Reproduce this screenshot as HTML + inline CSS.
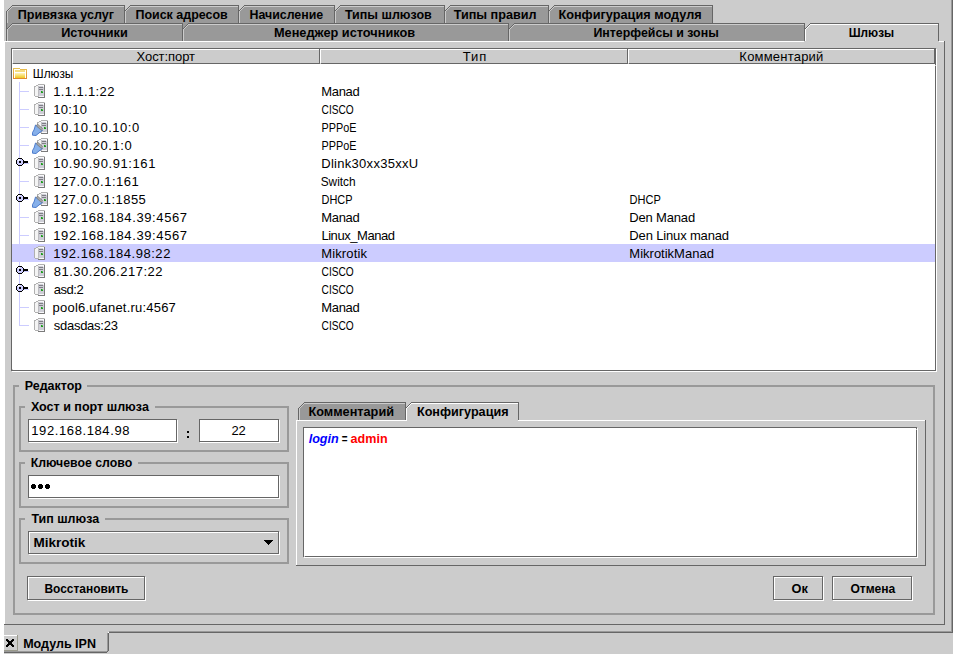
<!DOCTYPE html><html><head><meta charset="utf-8"><style>html,body{margin:0;padding:0;background:#fff;overflow:hidden}svg{display:block} text{font-family:"Liberation Sans",sans-serif;font-size:13px}</style></head><body><svg width="956" height="654" viewBox="0 0 956 654" shape-rendering="crispEdges"><rect x="0" y="0" width="956" height="654" fill="#ffffff"/>
<rect x="4" y="0" width="949" height="654" fill="#cccccc"/>
<rect x="951" y="0" width="1" height="632" fill="#999999"/>
<rect x="109" y="631" width="843" height="1" fill="#999999"/>
<rect x="952" y="0" width="1" height="633" fill="#666666"/>
<rect x="109" y="632" width="844" height="1" fill="#666666"/>
<rect x="107" y="633" width="1" height="18" fill="#999999"/>
<rect x="4" y="651" width="103" height="1" fill="#999999"/>
<rect x="108" y="633" width="1" height="18" fill="#666666"/>
<rect x="107" y="651" width="1" height="1" fill="#666666"/>
<rect x="4" y="652" width="103" height="1" fill="#666666"/>
<rect x="108" y="632" width="1" height="1" fill="#ffffff"/>
<rect x="4" y="635" width="13" height="1" fill="#ffffff"/>
<rect x="17" y="635" width="1" height="16" fill="#9a9a8c"/>
<rect x="4" y="650" width="14" height="1" fill="#9a9a8c"/>
<rect x="7" y="5" width="5" height="3" fill="#cccccc"/>
<rect x="7" y="8" width="2" height="2" fill="#cccccc"/>
<rect x="10" y="7" width="114" height="16" fill="#999999"/>
<rect x="8" y="10" width="2" height="13" fill="#999999"/>
<rect x="8" y="7" width="4" height="3" fill="#999999"/>
<rect x="7" y="5" width="1" height="1" fill="#cccccc"/>
<rect x="7" y="6" width="1" height="1" fill="#cccccc"/>
<rect x="7" y="7" width="1" height="1" fill="#cccccc"/>
<rect x="7" y="8" width="1" height="1" fill="#cccccc"/>
<rect x="7" y="9" width="1" height="1" fill="#cccccc"/>
<rect x="8" y="5" width="1" height="1" fill="#cccccc"/>
<rect x="8" y="6" width="1" height="1" fill="#cccccc"/>
<rect x="8" y="7" width="1" height="1" fill="#cccccc"/>
<rect x="8" y="8" width="1" height="1" fill="#cccccc"/>
<rect x="9" y="5" width="1" height="1" fill="#cccccc"/>
<rect x="9" y="6" width="1" height="1" fill="#cccccc"/>
<rect x="9" y="7" width="1" height="1" fill="#cccccc"/>
<rect x="10" y="5" width="1" height="1" fill="#cccccc"/>
<rect x="10" y="6" width="1" height="1" fill="#cccccc"/>
<rect x="11" y="5" width="1" height="1" fill="#cccccc"/>
<rect x="7" y="11" width="1" height="1" fill="#cccccc"/>
<rect x="8" y="10" width="1" height="1" fill="#cccccc"/>
<rect x="9" y="9" width="1" height="1" fill="#cccccc"/>
<rect x="10" y="8" width="1" height="1" fill="#cccccc"/>
<rect x="11" y="7" width="1" height="1" fill="#cccccc"/>
<rect x="12" y="6" width="1" height="1" fill="#cccccc"/>
<rect x="12" y="6" width="112" height="1" fill="#cccccc"/>
<rect x="7" y="11" width="1" height="12" fill="#cccccc"/>
<rect x="7" y="10" width="1" height="1" fill="#666666"/>
<rect x="8" y="9" width="1" height="1" fill="#666666"/>
<rect x="9" y="8" width="1" height="1" fill="#666666"/>
<rect x="10" y="7" width="1" height="1" fill="#666666"/>
<rect x="11" y="6" width="1" height="1" fill="#666666"/>
<rect x="12" y="5" width="1" height="1" fill="#666666"/>
<rect x="12" y="5" width="112" height="1" fill="#666666"/>
<rect x="6" y="11" width="1" height="12" fill="#666666"/>
<rect x="125" y="5" width="5" height="3" fill="#cccccc"/>
<rect x="125" y="8" width="2" height="2" fill="#cccccc"/>
<rect x="128" y="7" width="110" height="16" fill="#999999"/>
<rect x="126" y="10" width="2" height="13" fill="#999999"/>
<rect x="126" y="7" width="4" height="3" fill="#999999"/>
<rect x="125" y="5" width="1" height="1" fill="#cccccc"/>
<rect x="125" y="6" width="1" height="1" fill="#cccccc"/>
<rect x="125" y="7" width="1" height="1" fill="#cccccc"/>
<rect x="125" y="8" width="1" height="1" fill="#cccccc"/>
<rect x="125" y="9" width="1" height="1" fill="#cccccc"/>
<rect x="126" y="5" width="1" height="1" fill="#cccccc"/>
<rect x="126" y="6" width="1" height="1" fill="#cccccc"/>
<rect x="126" y="7" width="1" height="1" fill="#cccccc"/>
<rect x="126" y="8" width="1" height="1" fill="#cccccc"/>
<rect x="127" y="5" width="1" height="1" fill="#cccccc"/>
<rect x="127" y="6" width="1" height="1" fill="#cccccc"/>
<rect x="127" y="7" width="1" height="1" fill="#cccccc"/>
<rect x="128" y="5" width="1" height="1" fill="#cccccc"/>
<rect x="128" y="6" width="1" height="1" fill="#cccccc"/>
<rect x="129" y="5" width="1" height="1" fill="#cccccc"/>
<rect x="125" y="11" width="1" height="1" fill="#cccccc"/>
<rect x="126" y="10" width="1" height="1" fill="#cccccc"/>
<rect x="127" y="9" width="1" height="1" fill="#cccccc"/>
<rect x="128" y="8" width="1" height="1" fill="#cccccc"/>
<rect x="129" y="7" width="1" height="1" fill="#cccccc"/>
<rect x="130" y="6" width="1" height="1" fill="#cccccc"/>
<rect x="130" y="6" width="108" height="1" fill="#cccccc"/>
<rect x="125" y="11" width="1" height="12" fill="#cccccc"/>
<rect x="125" y="10" width="1" height="1" fill="#666666"/>
<rect x="126" y="9" width="1" height="1" fill="#666666"/>
<rect x="127" y="8" width="1" height="1" fill="#666666"/>
<rect x="128" y="7" width="1" height="1" fill="#666666"/>
<rect x="129" y="6" width="1" height="1" fill="#666666"/>
<rect x="130" y="5" width="1" height="1" fill="#666666"/>
<rect x="130" y="5" width="108" height="1" fill="#666666"/>
<rect x="124" y="5" width="1" height="18" fill="#666666"/>
<rect x="239" y="5" width="5" height="3" fill="#cccccc"/>
<rect x="239" y="8" width="2" height="2" fill="#cccccc"/>
<rect x="242" y="7" width="92" height="16" fill="#999999"/>
<rect x="240" y="10" width="2" height="13" fill="#999999"/>
<rect x="240" y="7" width="4" height="3" fill="#999999"/>
<rect x="239" y="5" width="1" height="1" fill="#cccccc"/>
<rect x="239" y="6" width="1" height="1" fill="#cccccc"/>
<rect x="239" y="7" width="1" height="1" fill="#cccccc"/>
<rect x="239" y="8" width="1" height="1" fill="#cccccc"/>
<rect x="239" y="9" width="1" height="1" fill="#cccccc"/>
<rect x="240" y="5" width="1" height="1" fill="#cccccc"/>
<rect x="240" y="6" width="1" height="1" fill="#cccccc"/>
<rect x="240" y="7" width="1" height="1" fill="#cccccc"/>
<rect x="240" y="8" width="1" height="1" fill="#cccccc"/>
<rect x="241" y="5" width="1" height="1" fill="#cccccc"/>
<rect x="241" y="6" width="1" height="1" fill="#cccccc"/>
<rect x="241" y="7" width="1" height="1" fill="#cccccc"/>
<rect x="242" y="5" width="1" height="1" fill="#cccccc"/>
<rect x="242" y="6" width="1" height="1" fill="#cccccc"/>
<rect x="243" y="5" width="1" height="1" fill="#cccccc"/>
<rect x="239" y="11" width="1" height="1" fill="#cccccc"/>
<rect x="240" y="10" width="1" height="1" fill="#cccccc"/>
<rect x="241" y="9" width="1" height="1" fill="#cccccc"/>
<rect x="242" y="8" width="1" height="1" fill="#cccccc"/>
<rect x="243" y="7" width="1" height="1" fill="#cccccc"/>
<rect x="244" y="6" width="1" height="1" fill="#cccccc"/>
<rect x="244" y="6" width="90" height="1" fill="#cccccc"/>
<rect x="239" y="11" width="1" height="12" fill="#cccccc"/>
<rect x="239" y="10" width="1" height="1" fill="#666666"/>
<rect x="240" y="9" width="1" height="1" fill="#666666"/>
<rect x="241" y="8" width="1" height="1" fill="#666666"/>
<rect x="242" y="7" width="1" height="1" fill="#666666"/>
<rect x="243" y="6" width="1" height="1" fill="#666666"/>
<rect x="244" y="5" width="1" height="1" fill="#666666"/>
<rect x="244" y="5" width="90" height="1" fill="#666666"/>
<rect x="238" y="5" width="1" height="18" fill="#666666"/>
<rect x="335" y="5" width="5" height="3" fill="#cccccc"/>
<rect x="335" y="8" width="2" height="2" fill="#cccccc"/>
<rect x="338" y="7" width="106" height="16" fill="#999999"/>
<rect x="336" y="10" width="2" height="13" fill="#999999"/>
<rect x="336" y="7" width="4" height="3" fill="#999999"/>
<rect x="335" y="5" width="1" height="1" fill="#cccccc"/>
<rect x="335" y="6" width="1" height="1" fill="#cccccc"/>
<rect x="335" y="7" width="1" height="1" fill="#cccccc"/>
<rect x="335" y="8" width="1" height="1" fill="#cccccc"/>
<rect x="335" y="9" width="1" height="1" fill="#cccccc"/>
<rect x="336" y="5" width="1" height="1" fill="#cccccc"/>
<rect x="336" y="6" width="1" height="1" fill="#cccccc"/>
<rect x="336" y="7" width="1" height="1" fill="#cccccc"/>
<rect x="336" y="8" width="1" height="1" fill="#cccccc"/>
<rect x="337" y="5" width="1" height="1" fill="#cccccc"/>
<rect x="337" y="6" width="1" height="1" fill="#cccccc"/>
<rect x="337" y="7" width="1" height="1" fill="#cccccc"/>
<rect x="338" y="5" width="1" height="1" fill="#cccccc"/>
<rect x="338" y="6" width="1" height="1" fill="#cccccc"/>
<rect x="339" y="5" width="1" height="1" fill="#cccccc"/>
<rect x="335" y="11" width="1" height="1" fill="#cccccc"/>
<rect x="336" y="10" width="1" height="1" fill="#cccccc"/>
<rect x="337" y="9" width="1" height="1" fill="#cccccc"/>
<rect x="338" y="8" width="1" height="1" fill="#cccccc"/>
<rect x="339" y="7" width="1" height="1" fill="#cccccc"/>
<rect x="340" y="6" width="1" height="1" fill="#cccccc"/>
<rect x="340" y="6" width="104" height="1" fill="#cccccc"/>
<rect x="335" y="11" width="1" height="12" fill="#cccccc"/>
<rect x="335" y="10" width="1" height="1" fill="#666666"/>
<rect x="336" y="9" width="1" height="1" fill="#666666"/>
<rect x="337" y="8" width="1" height="1" fill="#666666"/>
<rect x="338" y="7" width="1" height="1" fill="#666666"/>
<rect x="339" y="6" width="1" height="1" fill="#666666"/>
<rect x="340" y="5" width="1" height="1" fill="#666666"/>
<rect x="340" y="5" width="104" height="1" fill="#666666"/>
<rect x="334" y="5" width="1" height="18" fill="#666666"/>
<rect x="445" y="5" width="5" height="3" fill="#cccccc"/>
<rect x="445" y="8" width="2" height="2" fill="#cccccc"/>
<rect x="448" y="7" width="100" height="16" fill="#999999"/>
<rect x="446" y="10" width="2" height="13" fill="#999999"/>
<rect x="446" y="7" width="4" height="3" fill="#999999"/>
<rect x="445" y="5" width="1" height="1" fill="#cccccc"/>
<rect x="445" y="6" width="1" height="1" fill="#cccccc"/>
<rect x="445" y="7" width="1" height="1" fill="#cccccc"/>
<rect x="445" y="8" width="1" height="1" fill="#cccccc"/>
<rect x="445" y="9" width="1" height="1" fill="#cccccc"/>
<rect x="446" y="5" width="1" height="1" fill="#cccccc"/>
<rect x="446" y="6" width="1" height="1" fill="#cccccc"/>
<rect x="446" y="7" width="1" height="1" fill="#cccccc"/>
<rect x="446" y="8" width="1" height="1" fill="#cccccc"/>
<rect x="447" y="5" width="1" height="1" fill="#cccccc"/>
<rect x="447" y="6" width="1" height="1" fill="#cccccc"/>
<rect x="447" y="7" width="1" height="1" fill="#cccccc"/>
<rect x="448" y="5" width="1" height="1" fill="#cccccc"/>
<rect x="448" y="6" width="1" height="1" fill="#cccccc"/>
<rect x="449" y="5" width="1" height="1" fill="#cccccc"/>
<rect x="445" y="11" width="1" height="1" fill="#cccccc"/>
<rect x="446" y="10" width="1" height="1" fill="#cccccc"/>
<rect x="447" y="9" width="1" height="1" fill="#cccccc"/>
<rect x="448" y="8" width="1" height="1" fill="#cccccc"/>
<rect x="449" y="7" width="1" height="1" fill="#cccccc"/>
<rect x="450" y="6" width="1" height="1" fill="#cccccc"/>
<rect x="450" y="6" width="98" height="1" fill="#cccccc"/>
<rect x="445" y="11" width="1" height="12" fill="#cccccc"/>
<rect x="445" y="10" width="1" height="1" fill="#666666"/>
<rect x="446" y="9" width="1" height="1" fill="#666666"/>
<rect x="447" y="8" width="1" height="1" fill="#666666"/>
<rect x="448" y="7" width="1" height="1" fill="#666666"/>
<rect x="449" y="6" width="1" height="1" fill="#666666"/>
<rect x="450" y="5" width="1" height="1" fill="#666666"/>
<rect x="450" y="5" width="98" height="1" fill="#666666"/>
<rect x="444" y="5" width="1" height="18" fill="#666666"/>
<rect x="549" y="5" width="5" height="3" fill="#cccccc"/>
<rect x="549" y="8" width="2" height="2" fill="#cccccc"/>
<rect x="552" y="7" width="161" height="16" fill="#999999"/>
<rect x="550" y="10" width="2" height="13" fill="#999999"/>
<rect x="550" y="7" width="4" height="3" fill="#999999"/>
<rect x="549" y="5" width="1" height="1" fill="#cccccc"/>
<rect x="549" y="6" width="1" height="1" fill="#cccccc"/>
<rect x="549" y="7" width="1" height="1" fill="#cccccc"/>
<rect x="549" y="8" width="1" height="1" fill="#cccccc"/>
<rect x="549" y="9" width="1" height="1" fill="#cccccc"/>
<rect x="550" y="5" width="1" height="1" fill="#cccccc"/>
<rect x="550" y="6" width="1" height="1" fill="#cccccc"/>
<rect x="550" y="7" width="1" height="1" fill="#cccccc"/>
<rect x="550" y="8" width="1" height="1" fill="#cccccc"/>
<rect x="551" y="5" width="1" height="1" fill="#cccccc"/>
<rect x="551" y="6" width="1" height="1" fill="#cccccc"/>
<rect x="551" y="7" width="1" height="1" fill="#cccccc"/>
<rect x="552" y="5" width="1" height="1" fill="#cccccc"/>
<rect x="552" y="6" width="1" height="1" fill="#cccccc"/>
<rect x="553" y="5" width="1" height="1" fill="#cccccc"/>
<rect x="549" y="11" width="1" height="1" fill="#cccccc"/>
<rect x="550" y="10" width="1" height="1" fill="#cccccc"/>
<rect x="551" y="9" width="1" height="1" fill="#cccccc"/>
<rect x="552" y="8" width="1" height="1" fill="#cccccc"/>
<rect x="553" y="7" width="1" height="1" fill="#cccccc"/>
<rect x="554" y="6" width="1" height="1" fill="#cccccc"/>
<rect x="554" y="6" width="158" height="1" fill="#cccccc"/>
<rect x="549" y="11" width="1" height="12" fill="#cccccc"/>
<rect x="549" y="10" width="1" height="1" fill="#666666"/>
<rect x="550" y="9" width="1" height="1" fill="#666666"/>
<rect x="551" y="8" width="1" height="1" fill="#666666"/>
<rect x="552" y="7" width="1" height="1" fill="#666666"/>
<rect x="553" y="6" width="1" height="1" fill="#666666"/>
<rect x="554" y="5" width="1" height="1" fill="#666666"/>
<rect x="554" y="5" width="159" height="1" fill="#666666"/>
<rect x="712" y="6" width="1" height="17" fill="#666666"/>
<rect x="548" y="5" width="1" height="18" fill="#666666"/>
<rect x="7" y="23" width="5" height="3" fill="#999999"/>
<rect x="7" y="26" width="2" height="2" fill="#999999"/>
<rect x="10" y="25" width="172" height="16" fill="#999999"/>
<rect x="8" y="28" width="2" height="13" fill="#999999"/>
<rect x="8" y="25" width="4" height="3" fill="#999999"/>
<rect x="7" y="23" width="1" height="1" fill="#999999"/>
<rect x="7" y="24" width="1" height="1" fill="#999999"/>
<rect x="7" y="25" width="1" height="1" fill="#999999"/>
<rect x="7" y="26" width="1" height="1" fill="#999999"/>
<rect x="7" y="27" width="1" height="1" fill="#999999"/>
<rect x="8" y="23" width="1" height="1" fill="#999999"/>
<rect x="8" y="24" width="1" height="1" fill="#999999"/>
<rect x="8" y="25" width="1" height="1" fill="#999999"/>
<rect x="8" y="26" width="1" height="1" fill="#999999"/>
<rect x="9" y="23" width="1" height="1" fill="#999999"/>
<rect x="9" y="24" width="1" height="1" fill="#999999"/>
<rect x="9" y="25" width="1" height="1" fill="#999999"/>
<rect x="10" y="23" width="1" height="1" fill="#999999"/>
<rect x="10" y="24" width="1" height="1" fill="#999999"/>
<rect x="11" y="23" width="1" height="1" fill="#999999"/>
<rect x="7" y="29" width="1" height="1" fill="#cccccc"/>
<rect x="8" y="28" width="1" height="1" fill="#cccccc"/>
<rect x="9" y="27" width="1" height="1" fill="#cccccc"/>
<rect x="10" y="26" width="1" height="1" fill="#cccccc"/>
<rect x="11" y="25" width="1" height="1" fill="#cccccc"/>
<rect x="12" y="24" width="1" height="1" fill="#cccccc"/>
<rect x="12" y="24" width="170" height="1" fill="#cccccc"/>
<rect x="7" y="29" width="1" height="12" fill="#cccccc"/>
<rect x="7" y="28" width="1" height="1" fill="#666666"/>
<rect x="8" y="27" width="1" height="1" fill="#666666"/>
<rect x="9" y="26" width="1" height="1" fill="#666666"/>
<rect x="10" y="25" width="1" height="1" fill="#666666"/>
<rect x="11" y="24" width="1" height="1" fill="#666666"/>
<rect x="12" y="23" width="1" height="1" fill="#666666"/>
<rect x="12" y="23" width="170" height="1" fill="#666666"/>
<rect x="6" y="23" width="1" height="18" fill="#666666"/>
<rect x="183" y="23" width="5" height="3" fill="#999999"/>
<rect x="183" y="26" width="2" height="2" fill="#999999"/>
<rect x="186" y="25" width="322" height="16" fill="#999999"/>
<rect x="184" y="28" width="2" height="13" fill="#999999"/>
<rect x="184" y="25" width="4" height="3" fill="#999999"/>
<rect x="183" y="23" width="1" height="1" fill="#999999"/>
<rect x="183" y="24" width="1" height="1" fill="#999999"/>
<rect x="183" y="25" width="1" height="1" fill="#999999"/>
<rect x="183" y="26" width="1" height="1" fill="#999999"/>
<rect x="183" y="27" width="1" height="1" fill="#999999"/>
<rect x="184" y="23" width="1" height="1" fill="#999999"/>
<rect x="184" y="24" width="1" height="1" fill="#999999"/>
<rect x="184" y="25" width="1" height="1" fill="#999999"/>
<rect x="184" y="26" width="1" height="1" fill="#999999"/>
<rect x="185" y="23" width="1" height="1" fill="#999999"/>
<rect x="185" y="24" width="1" height="1" fill="#999999"/>
<rect x="185" y="25" width="1" height="1" fill="#999999"/>
<rect x="186" y="23" width="1" height="1" fill="#999999"/>
<rect x="186" y="24" width="1" height="1" fill="#999999"/>
<rect x="187" y="23" width="1" height="1" fill="#999999"/>
<rect x="183" y="29" width="1" height="1" fill="#cccccc"/>
<rect x="184" y="28" width="1" height="1" fill="#cccccc"/>
<rect x="185" y="27" width="1" height="1" fill="#cccccc"/>
<rect x="186" y="26" width="1" height="1" fill="#cccccc"/>
<rect x="187" y="25" width="1" height="1" fill="#cccccc"/>
<rect x="188" y="24" width="1" height="1" fill="#cccccc"/>
<rect x="188" y="24" width="320" height="1" fill="#cccccc"/>
<rect x="183" y="29" width="1" height="12" fill="#cccccc"/>
<rect x="183" y="28" width="1" height="1" fill="#666666"/>
<rect x="184" y="27" width="1" height="1" fill="#666666"/>
<rect x="185" y="26" width="1" height="1" fill="#666666"/>
<rect x="186" y="25" width="1" height="1" fill="#666666"/>
<rect x="187" y="24" width="1" height="1" fill="#666666"/>
<rect x="188" y="23" width="1" height="1" fill="#666666"/>
<rect x="188" y="23" width="320" height="1" fill="#666666"/>
<rect x="182" y="23" width="1" height="18" fill="#666666"/>
<rect x="509" y="23" width="5" height="3" fill="#999999"/>
<rect x="509" y="26" width="2" height="2" fill="#999999"/>
<rect x="512" y="25" width="292" height="16" fill="#999999"/>
<rect x="510" y="28" width="2" height="13" fill="#999999"/>
<rect x="510" y="25" width="4" height="3" fill="#999999"/>
<rect x="509" y="23" width="1" height="1" fill="#999999"/>
<rect x="509" y="24" width="1" height="1" fill="#999999"/>
<rect x="509" y="25" width="1" height="1" fill="#999999"/>
<rect x="509" y="26" width="1" height="1" fill="#999999"/>
<rect x="509" y="27" width="1" height="1" fill="#999999"/>
<rect x="510" y="23" width="1" height="1" fill="#999999"/>
<rect x="510" y="24" width="1" height="1" fill="#999999"/>
<rect x="510" y="25" width="1" height="1" fill="#999999"/>
<rect x="510" y="26" width="1" height="1" fill="#999999"/>
<rect x="511" y="23" width="1" height="1" fill="#999999"/>
<rect x="511" y="24" width="1" height="1" fill="#999999"/>
<rect x="511" y="25" width="1" height="1" fill="#999999"/>
<rect x="512" y="23" width="1" height="1" fill="#999999"/>
<rect x="512" y="24" width="1" height="1" fill="#999999"/>
<rect x="513" y="23" width="1" height="1" fill="#999999"/>
<rect x="509" y="29" width="1" height="1" fill="#cccccc"/>
<rect x="510" y="28" width="1" height="1" fill="#cccccc"/>
<rect x="511" y="27" width="1" height="1" fill="#cccccc"/>
<rect x="512" y="26" width="1" height="1" fill="#cccccc"/>
<rect x="513" y="25" width="1" height="1" fill="#cccccc"/>
<rect x="514" y="24" width="1" height="1" fill="#cccccc"/>
<rect x="514" y="24" width="290" height="1" fill="#cccccc"/>
<rect x="509" y="29" width="1" height="12" fill="#cccccc"/>
<rect x="509" y="28" width="1" height="1" fill="#666666"/>
<rect x="510" y="27" width="1" height="1" fill="#666666"/>
<rect x="511" y="26" width="1" height="1" fill="#666666"/>
<rect x="512" y="25" width="1" height="1" fill="#666666"/>
<rect x="513" y="24" width="1" height="1" fill="#666666"/>
<rect x="514" y="23" width="1" height="1" fill="#666666"/>
<rect x="514" y="23" width="290" height="1" fill="#666666"/>
<rect x="508" y="23" width="1" height="18" fill="#666666"/>
<rect x="805" y="23" width="5" height="3" fill="#cccccc"/>
<rect x="805" y="26" width="2" height="2" fill="#cccccc"/>
<rect x="808" y="25" width="131" height="16" fill="#cccccc"/>
<rect x="806" y="28" width="2" height="13" fill="#cccccc"/>
<rect x="806" y="25" width="4" height="3" fill="#cccccc"/>
<rect x="805" y="23" width="1" height="1" fill="#cccccc"/>
<rect x="805" y="24" width="1" height="1" fill="#cccccc"/>
<rect x="805" y="25" width="1" height="1" fill="#cccccc"/>
<rect x="805" y="26" width="1" height="1" fill="#cccccc"/>
<rect x="805" y="27" width="1" height="1" fill="#cccccc"/>
<rect x="806" y="23" width="1" height="1" fill="#cccccc"/>
<rect x="806" y="24" width="1" height="1" fill="#cccccc"/>
<rect x="806" y="25" width="1" height="1" fill="#cccccc"/>
<rect x="806" y="26" width="1" height="1" fill="#cccccc"/>
<rect x="807" y="23" width="1" height="1" fill="#cccccc"/>
<rect x="807" y="24" width="1" height="1" fill="#cccccc"/>
<rect x="807" y="25" width="1" height="1" fill="#cccccc"/>
<rect x="808" y="23" width="1" height="1" fill="#cccccc"/>
<rect x="808" y="24" width="1" height="1" fill="#cccccc"/>
<rect x="809" y="23" width="1" height="1" fill="#cccccc"/>
<rect x="805" y="29" width="1" height="1" fill="#ffffff"/>
<rect x="806" y="28" width="1" height="1" fill="#ffffff"/>
<rect x="807" y="27" width="1" height="1" fill="#ffffff"/>
<rect x="808" y="26" width="1" height="1" fill="#ffffff"/>
<rect x="809" y="25" width="1" height="1" fill="#ffffff"/>
<rect x="810" y="24" width="1" height="1" fill="#ffffff"/>
<rect x="810" y="24" width="128" height="1" fill="#ffffff"/>
<rect x="805" y="29" width="1" height="12" fill="#ffffff"/>
<rect x="805" y="28" width="1" height="1" fill="#666666"/>
<rect x="806" y="27" width="1" height="1" fill="#666666"/>
<rect x="807" y="26" width="1" height="1" fill="#666666"/>
<rect x="808" y="25" width="1" height="1" fill="#666666"/>
<rect x="809" y="24" width="1" height="1" fill="#666666"/>
<rect x="810" y="23" width="1" height="1" fill="#666666"/>
<rect x="810" y="23" width="129" height="1" fill="#666666"/>
<rect x="938" y="24" width="1" height="17" fill="#666666"/>
<rect x="804" y="23" width="1" height="18" fill="#666666"/>
<rect x="4" y="41" width="800" height="1" fill="#ffffff"/>
<rect x="939" y="41" width="5" height="1" fill="#ffffff"/>
<rect x="4" y="41" width="1" height="583" fill="#ffffff"/>
<rect x="944" y="41" width="1" height="584" fill="#666666"/>
<rect x="4" y="624" width="941" height="1" fill="#666666"/>
<rect x="12" y="49" width="923" height="321" fill="#ffffff"/>
<rect x="11" y="48" width="925" height="1" fill="#666666"/>
<rect x="11" y="370" width="925" height="1" fill="#666666"/>
<rect x="11" y="48" width="1" height="323" fill="#666666"/>
<rect x="935" y="48" width="1" height="323" fill="#666666"/>
<rect x="936" y="49" width="1" height="323" fill="#ffffff"/>
<rect x="12" y="371" width="925" height="1" fill="#ffffff"/>
<rect x="935" y="65" width="1" height="1" fill="#cccccc"/>
<rect x="12" y="369" width="1" height="1" fill="#cccccc"/>
<rect x="12" y="49" width="308" height="15" fill="#cccccc"/>
<rect x="12" y="49" width="307" height="1" fill="#ffffff"/>
<rect x="12" y="49" width="1" height="14" fill="#ffffff"/>
<rect x="319" y="49" width="1" height="15" fill="#666666"/>
<rect x="13" y="63" width="307" height="1" fill="#666666"/>
<rect x="320" y="49" width="308" height="15" fill="#cccccc"/>
<rect x="320" y="49" width="307" height="1" fill="#ffffff"/>
<rect x="320" y="49" width="1" height="14" fill="#ffffff"/>
<rect x="627" y="49" width="1" height="15" fill="#666666"/>
<rect x="321" y="63" width="307" height="1" fill="#666666"/>
<rect x="628" y="49" width="307" height="15" fill="#cccccc"/>
<rect x="628" y="49" width="306" height="1" fill="#ffffff"/>
<rect x="628" y="49" width="1" height="14" fill="#ffffff"/>
<rect x="934" y="49" width="1" height="15" fill="#666666"/>
<rect x="629" y="63" width="306" height="1" fill="#666666"/>
<rect x="12" y="244" width="923" height="18" fill="#ccccff"/>
<rect x="19" y="82" width="1" height="244" fill="#ccccff"/>
<rect x="20" y="91" width="9" height="1" fill="#ccccff"/>
<rect x="20" y="109" width="9" height="1" fill="#ccccff"/>
<rect x="20" y="127" width="9" height="1" fill="#ccccff"/>
<rect x="20" y="145" width="9" height="1" fill="#ccccff"/>
<rect x="20" y="163" width="9" height="1" fill="#ccccff"/>
<rect x="20" y="181" width="9" height="1" fill="#ccccff"/>
<rect x="20" y="199" width="9" height="1" fill="#ccccff"/>
<rect x="20" y="217" width="9" height="1" fill="#ccccff"/>
<rect x="20" y="235" width="9" height="1" fill="#ccccff"/>
<rect x="20" y="253" width="9" height="1" fill="#ccccff"/>
<rect x="20" y="271" width="9" height="1" fill="#ccccff"/>
<rect x="20" y="289" width="9" height="1" fill="#ccccff"/>
<rect x="20" y="307" width="9" height="1" fill="#ccccff"/>
<rect x="20" y="325" width="9" height="1" fill="#ccccff"/>
<rect x="17" y="159" width="6" height="6" fill="#ccccff"/>
<rect x="18" y="158" width="4" height="8" fill="#ccccff"/>
<rect x="18" y="159" width="1" height="1" fill="#ffffff"/>
<rect x="18" y="160" width="1" height="1" fill="#ffffff"/>
<rect x="19" y="159" width="1" height="1" fill="#ffffff"/>
<rect x="18" y="158" width="4" height="1" fill="#000"/>
<rect x="18" y="165" width="4" height="1" fill="#000"/>
<rect x="16" y="160" width="1" height="4" fill="#000"/>
<rect x="23" y="160" width="1" height="4" fill="#000"/>
<rect x="17" y="159" width="1" height="1" fill="#000"/>
<rect x="22" y="159" width="1" height="1" fill="#000"/>
<rect x="17" y="164" width="1" height="1" fill="#000"/>
<rect x="22" y="164" width="1" height="1" fill="#000"/>
<rect x="19" y="161" width="2" height="2" fill="#000"/>
<rect x="24" y="161" width="4" height="2" fill="#000"/>
<rect x="17" y="195" width="6" height="6" fill="#ccccff"/>
<rect x="18" y="194" width="4" height="8" fill="#ccccff"/>
<rect x="18" y="195" width="1" height="1" fill="#ffffff"/>
<rect x="18" y="196" width="1" height="1" fill="#ffffff"/>
<rect x="19" y="195" width="1" height="1" fill="#ffffff"/>
<rect x="18" y="194" width="4" height="1" fill="#000"/>
<rect x="18" y="201" width="4" height="1" fill="#000"/>
<rect x="16" y="196" width="1" height="4" fill="#000"/>
<rect x="23" y="196" width="1" height="4" fill="#000"/>
<rect x="17" y="195" width="1" height="1" fill="#000"/>
<rect x="22" y="195" width="1" height="1" fill="#000"/>
<rect x="17" y="200" width="1" height="1" fill="#000"/>
<rect x="22" y="200" width="1" height="1" fill="#000"/>
<rect x="19" y="197" width="2" height="2" fill="#000"/>
<rect x="24" y="197" width="4" height="2" fill="#000"/>
<rect x="17" y="267" width="6" height="6" fill="#ccccff"/>
<rect x="18" y="266" width="4" height="8" fill="#ccccff"/>
<rect x="18" y="267" width="1" height="1" fill="#ffffff"/>
<rect x="18" y="268" width="1" height="1" fill="#ffffff"/>
<rect x="19" y="267" width="1" height="1" fill="#ffffff"/>
<rect x="18" y="266" width="4" height="1" fill="#000"/>
<rect x="18" y="273" width="4" height="1" fill="#000"/>
<rect x="16" y="268" width="1" height="4" fill="#000"/>
<rect x="23" y="268" width="1" height="4" fill="#000"/>
<rect x="17" y="267" width="1" height="1" fill="#000"/>
<rect x="22" y="267" width="1" height="1" fill="#000"/>
<rect x="17" y="272" width="1" height="1" fill="#000"/>
<rect x="22" y="272" width="1" height="1" fill="#000"/>
<rect x="19" y="269" width="2" height="2" fill="#000"/>
<rect x="24" y="269" width="4" height="2" fill="#000"/>
<rect x="17" y="285" width="6" height="6" fill="#ccccff"/>
<rect x="18" y="284" width="4" height="8" fill="#ccccff"/>
<rect x="18" y="285" width="1" height="1" fill="#ffffff"/>
<rect x="18" y="286" width="1" height="1" fill="#ffffff"/>
<rect x="19" y="285" width="1" height="1" fill="#ffffff"/>
<rect x="18" y="284" width="4" height="1" fill="#000"/>
<rect x="18" y="291" width="4" height="1" fill="#000"/>
<rect x="16" y="286" width="1" height="4" fill="#000"/>
<rect x="23" y="286" width="1" height="4" fill="#000"/>
<rect x="17" y="285" width="1" height="1" fill="#000"/>
<rect x="22" y="285" width="1" height="1" fill="#000"/>
<rect x="17" y="290" width="1" height="1" fill="#000"/>
<rect x="22" y="290" width="1" height="1" fill="#000"/>
<rect x="19" y="287" width="2" height="2" fill="#000"/>
<rect x="24" y="287" width="4" height="2" fill="#000"/>
<defs><g id="srv"><rect x="4" y="0" width="6" height="1" fill="#b0b0b0"/><rect x="10" y="0" width="1" height="1" fill="#c8c8c8"/><rect x="2" y="1" width="2" height="1" fill="#b0b0b0"/><rect x="4" y="1" width="1" height="1" fill="#f4f4f4"/><rect x="5" y="1" width="5" height="1" fill="#f8f8fa"/><rect x="10" y="1" width="1" height="1" fill="#7a7a7a"/><rect x="0" y="2" width="2" height="1" fill="#b0b0b0"/><rect x="2" y="2" width="2" height="1" fill="#f4f4f4"/><rect x="4" y="2" width="1" height="1" fill="#bcbcc0"/><rect x="5" y="2" width="4" height="1" fill="#ceced6"/><rect x="9" y="2" width="1" height="1" fill="#f8f8fa"/><rect x="10" y="2" width="1" height="1" fill="#7a7a7a"/><rect x="0" y="3" width="1" height="1" fill="#b0b0b0"/><rect x="1" y="3" width="3" height="1" fill="#f4f4f4"/><rect x="4" y="3" width="1" height="1" fill="#bcbcc0"/><rect x="5" y="3" width="4" height="1" fill="#7e7e84"/><rect x="9" y="3" width="1" height="1" fill="#ceced6"/><rect x="10" y="3" width="1" height="1" fill="#7a7a7a"/><rect x="0" y="4" width="1" height="1" fill="#b0b0b0"/><rect x="1" y="4" width="3" height="1" fill="#f4f4f4"/><rect x="4" y="4" width="1" height="1" fill="#bcbcc0"/><rect x="5" y="4" width="5" height="1" fill="#ceced6"/><rect x="10" y="4" width="1" height="1" fill="#7a7a7a"/><rect x="0" y="5" width="1" height="1" fill="#b0b0b0"/><rect x="1" y="5" width="3" height="1" fill="#f4f4f4"/><rect x="4" y="5" width="1" height="1" fill="#bcbcc0"/><rect x="5" y="5" width="4" height="1" fill="#7e7e84"/><rect x="9" y="5" width="1" height="1" fill="#ceced6"/><rect x="10" y="5" width="1" height="1" fill="#7a7a7a"/><rect x="0" y="6" width="1" height="1" fill="#b0b0b0"/><rect x="1" y="6" width="3" height="1" fill="#f4f4f4"/><rect x="4" y="6" width="1" height="1" fill="#bcbcc0"/><rect x="5" y="6" width="5" height="1" fill="#ceced6"/><rect x="10" y="6" width="1" height="1" fill="#7a7a7a"/><rect x="0" y="7" width="1" height="1" fill="#b0b0b0"/><rect x="1" y="7" width="3" height="1" fill="#f4f4f4"/><rect x="4" y="7" width="1" height="1" fill="#bcbcc0"/><rect x="5" y="7" width="2" height="1" fill="#ceced6"/><rect x="7" y="7" width="1" height="1" fill="#1f9a1f"/><rect x="8" y="7" width="1" height="1" fill="#5cc05c"/><rect x="9" y="7" width="1" height="1" fill="#ceced6"/><rect x="10" y="7" width="1" height="1" fill="#7a7a7a"/><rect x="0" y="8" width="1" height="1" fill="#b0b0b0"/><rect x="1" y="8" width="3" height="1" fill="#f4f4f4"/><rect x="4" y="8" width="1" height="1" fill="#bcbcc0"/><rect x="5" y="8" width="2" height="1" fill="#ceced6"/><rect x="7" y="8" width="2" height="1" fill="#1f9a1f"/><rect x="9" y="8" width="1" height="1" fill="#ceced6"/><rect x="10" y="8" width="1" height="1" fill="#7a7a7a"/><rect x="0" y="9" width="1" height="1" fill="#b0b0b0"/><rect x="1" y="9" width="3" height="1" fill="#f4f4f4"/><rect x="4" y="9" width="1" height="1" fill="#bcbcc0"/><rect x="5" y="9" width="5" height="1" fill="#ceced6"/><rect x="10" y="9" width="1" height="1" fill="#7a7a7a"/><rect x="0" y="10" width="1" height="1" fill="#b0b0b0"/><rect x="1" y="10" width="3" height="1" fill="#f4f4f4"/><rect x="4" y="10" width="1" height="1" fill="#bcbcc0"/><rect x="5" y="10" width="5" height="1" fill="#ceced6"/><rect x="10" y="10" width="1" height="1" fill="#7a7a7a"/><rect x="0" y="11" width="1" height="1" fill="#b0b0b0"/><rect x="1" y="11" width="3" height="1" fill="#f4f4f4"/><rect x="4" y="11" width="1" height="1" fill="#bcbcc0"/><rect x="5" y="11" width="5" height="1" fill="#ceced6"/><rect x="10" y="11" width="1" height="1" fill="#7a7a7a"/><rect x="1" y="12" width="3" height="1" fill="#b0b0b0"/><rect x="4" y="12" width="1" height="1" fill="#bcbcc0"/><rect x="5" y="12" width="5" height="1" fill="#f8f8fa"/><rect x="10" y="12" width="1" height="1" fill="#7a7a7a"/><rect x="4" y="13" width="7" height="1" fill="#7a7a7a"/></g></defs>
<use href="#srv" x="34" y="84"/>
<use href="#srv" x="34" y="102"/>
<use href="#srv" x="37" y="120"/>
<g shape-rendering="auto"><path d="M35.5 125 L42.5 130.5 L39 133 L36 135.5 L32.5 135.2 L32.5 132.5 L34 130 Z" fill="#86b0ea" stroke="#4273c8" stroke-width="0.9"/><path d="M37.5 124 L42.5 128.5 L41.5 130.5 L36.5 126 Z" fill="#a8a8a8" stroke="#777" stroke-width="0.7"/></g>
<use href="#srv" x="37" y="138"/>
<g shape-rendering="auto"><path d="M35.5 143 L42.5 148.5 L39 151 L36 153.5 L32.5 153.2 L32.5 150.5 L34 148 Z" fill="#86b0ea" stroke="#4273c8" stroke-width="0.9"/><path d="M37.5 142 L42.5 146.5 L41.5 148.5 L36.5 144 Z" fill="#a8a8a8" stroke="#777" stroke-width="0.7"/></g>
<use href="#srv" x="34" y="156"/>
<use href="#srv" x="34" y="174"/>
<use href="#srv" x="37" y="192"/>
<g shape-rendering="auto"><path d="M35.5 197 L42.5 202.5 L39 205 L36 207.5 L32.5 207.2 L32.5 204.5 L34 202 Z" fill="#86b0ea" stroke="#4273c8" stroke-width="0.9"/><path d="M37.5 196 L42.5 200.5 L41.5 202.5 L36.5 198 Z" fill="#a8a8a8" stroke="#777" stroke-width="0.7"/></g>
<use href="#srv" x="34" y="210"/>
<use href="#srv" x="34" y="228"/>
<use href="#srv" x="34" y="246"/>
<use href="#srv" x="34" y="264"/>
<use href="#srv" x="34" y="282"/>
<use href="#srv" x="34" y="300"/>
<use href="#srv" x="34" y="318"/>
<defs><linearGradient id="fg" x1="0" y1="0" x2="0" y2="1"><stop offset="0" stop-color="#fff4c0"/><stop offset="1" stop-color="#f0c820"/></linearGradient><linearGradient id="fo" x1="0" y1="0" x2="0" y2="1"><stop offset="0" stop-color="#e8c050"/><stop offset="1" stop-color="#e08a30"/></linearGradient></defs>
<path d="M13.5 78.5 L13.5 68.5 L19.5 68.5 L20.5 69.5 L26.5 69.5 L26.5 78.5 Z" fill="#fff" stroke="url(#fo)" stroke-width="1"/>
<rect x="15" y="73" width="10" height="5" fill="url(#fg)"/>
<rect x="15" y="70" width="10" height="2" fill="#f6dc80"/>
<rect x="13" y="385" width="6" height="2" fill="#999999"/>
<rect x="87" y="385" width="848" height="2" fill="#999999"/>
<rect x="13" y="385" width="2" height="230" fill="#999999"/>
<rect x="933" y="385" width="2" height="230" fill="#999999"/>
<rect x="13" y="613" width="922" height="2" fill="#999999"/>
<rect x="19" y="406" width="6" height="2" fill="#999999"/>
<rect x="155" y="406" width="134" height="2" fill="#999999"/>
<rect x="19" y="406" width="2" height="46" fill="#999999"/>
<rect x="287" y="406" width="2" height="46" fill="#999999"/>
<rect x="19" y="450" width="270" height="2" fill="#999999"/>
<rect x="19" y="462" width="6" height="2" fill="#999999"/>
<rect x="138" y="462" width="151" height="2" fill="#999999"/>
<rect x="19" y="462" width="2" height="46" fill="#999999"/>
<rect x="287" y="462" width="2" height="46" fill="#999999"/>
<rect x="19" y="506" width="270" height="2" fill="#999999"/>
<rect x="19" y="518" width="6" height="2" fill="#999999"/>
<rect x="105" y="518" width="184" height="2" fill="#999999"/>
<rect x="19" y="518" width="2" height="46" fill="#999999"/>
<rect x="287" y="518" width="2" height="46" fill="#999999"/>
<rect x="19" y="562" width="270" height="2" fill="#999999"/>
<rect x="29" y="420" width="148" height="21" fill="#ffffff"/>
<rect x="29" y="442" width="149" height="1" fill="#ffffff"/>
<rect x="177" y="420" width="1" height="23" fill="#ffffff"/>
<rect x="29" y="420" width="148" height="1" fill="#ffffff"/>
<rect x="29" y="420" width="1" height="22" fill="#ffffff"/>
<rect x="28" y="419" width="149" height="1" fill="#666666"/>
<rect x="28" y="441" width="149" height="1" fill="#666666"/>
<rect x="28" y="419" width="1" height="23" fill="#666666"/>
<rect x="176" y="419" width="1" height="23" fill="#666666"/>
<rect x="200" y="420" width="78" height="21" fill="#ffffff"/>
<rect x="200" y="442" width="80" height="1" fill="#ffffff"/>
<rect x="279" y="420" width="1" height="23" fill="#ffffff"/>
<rect x="200" y="420" width="79" height="1" fill="#ffffff"/>
<rect x="200" y="420" width="1" height="22" fill="#ffffff"/>
<rect x="199" y="419" width="80" height="1" fill="#666666"/>
<rect x="199" y="441" width="80" height="1" fill="#666666"/>
<rect x="199" y="419" width="1" height="23" fill="#666666"/>
<rect x="278" y="419" width="1" height="23" fill="#666666"/>
<rect x="187" y="431" width="2" height="2" fill="#000"/>
<rect x="187" y="436" width="2" height="2" fill="#000"/>
<rect x="29" y="476" width="249" height="21" fill="#ffffff"/>
<rect x="29" y="498" width="251" height="1" fill="#ffffff"/>
<rect x="279" y="476" width="1" height="23" fill="#ffffff"/>
<rect x="29" y="476" width="250" height="1" fill="#ffffff"/>
<rect x="29" y="476" width="1" height="22" fill="#ffffff"/>
<rect x="28" y="475" width="251" height="1" fill="#666666"/>
<rect x="28" y="497" width="251" height="1" fill="#666666"/>
<rect x="28" y="475" width="1" height="23" fill="#666666"/>
<rect x="278" y="475" width="1" height="23" fill="#666666"/>
<rect x="32" y="484" width="3" height="5" fill="#000"/>
<rect x="31" y="485" width="5" height="3" fill="#000"/>
<rect x="39" y="484" width="3" height="5" fill="#000"/>
<rect x="38" y="485" width="5" height="3" fill="#000"/>
<rect x="46" y="484" width="3" height="5" fill="#000"/>
<rect x="45" y="485" width="5" height="3" fill="#000"/>
<rect x="29" y="554" width="251" height="1" fill="#ffffff"/>
<rect x="279" y="532" width="1" height="23" fill="#ffffff"/>
<rect x="29" y="532" width="250" height="1" fill="#ffffff"/>
<rect x="29" y="532" width="1" height="22" fill="#ffffff"/>
<rect x="28" y="531" width="251" height="1" fill="#666666"/>
<rect x="28" y="553" width="251" height="1" fill="#666666"/>
<rect x="28" y="531" width="1" height="23" fill="#666666"/>
<rect x="278" y="531" width="1" height="23" fill="#666666"/>
<path d="M263 540 L273 540 L268 545 Z" fill="#000"/>
<rect x="299" y="402" width="5" height="3" fill="#cccccc"/>
<rect x="299" y="405" width="2" height="2" fill="#cccccc"/>
<rect x="302" y="404" width="103" height="16" fill="#999999"/>
<rect x="300" y="407" width="2" height="13" fill="#999999"/>
<rect x="300" y="404" width="4" height="3" fill="#999999"/>
<rect x="299" y="402" width="1" height="1" fill="#cccccc"/>
<rect x="299" y="403" width="1" height="1" fill="#cccccc"/>
<rect x="299" y="404" width="1" height="1" fill="#cccccc"/>
<rect x="299" y="405" width="1" height="1" fill="#cccccc"/>
<rect x="299" y="406" width="1" height="1" fill="#cccccc"/>
<rect x="300" y="402" width="1" height="1" fill="#cccccc"/>
<rect x="300" y="403" width="1" height="1" fill="#cccccc"/>
<rect x="300" y="404" width="1" height="1" fill="#cccccc"/>
<rect x="300" y="405" width="1" height="1" fill="#cccccc"/>
<rect x="301" y="402" width="1" height="1" fill="#cccccc"/>
<rect x="301" y="403" width="1" height="1" fill="#cccccc"/>
<rect x="301" y="404" width="1" height="1" fill="#cccccc"/>
<rect x="302" y="402" width="1" height="1" fill="#cccccc"/>
<rect x="302" y="403" width="1" height="1" fill="#cccccc"/>
<rect x="303" y="402" width="1" height="1" fill="#cccccc"/>
<rect x="299" y="408" width="1" height="1" fill="#cccccc"/>
<rect x="300" y="407" width="1" height="1" fill="#cccccc"/>
<rect x="301" y="406" width="1" height="1" fill="#cccccc"/>
<rect x="302" y="405" width="1" height="1" fill="#cccccc"/>
<rect x="303" y="404" width="1" height="1" fill="#cccccc"/>
<rect x="304" y="403" width="1" height="1" fill="#cccccc"/>
<rect x="304" y="403" width="101" height="1" fill="#cccccc"/>
<rect x="299" y="408" width="1" height="12" fill="#cccccc"/>
<rect x="299" y="407" width="1" height="1" fill="#666666"/>
<rect x="300" y="406" width="1" height="1" fill="#666666"/>
<rect x="301" y="405" width="1" height="1" fill="#666666"/>
<rect x="302" y="404" width="1" height="1" fill="#666666"/>
<rect x="303" y="403" width="1" height="1" fill="#666666"/>
<rect x="304" y="402" width="1" height="1" fill="#666666"/>
<rect x="304" y="402" width="101" height="1" fill="#666666"/>
<rect x="298" y="408" width="1" height="12" fill="#666666"/>
<rect x="406" y="402" width="5" height="3" fill="#cccccc"/>
<rect x="406" y="405" width="2" height="2" fill="#cccccc"/>
<rect x="409" y="404" width="110" height="16" fill="#cccccc"/>
<rect x="407" y="407" width="2" height="13" fill="#cccccc"/>
<rect x="407" y="404" width="4" height="3" fill="#cccccc"/>
<rect x="406" y="402" width="1" height="1" fill="#cccccc"/>
<rect x="406" y="403" width="1" height="1" fill="#cccccc"/>
<rect x="406" y="404" width="1" height="1" fill="#cccccc"/>
<rect x="406" y="405" width="1" height="1" fill="#cccccc"/>
<rect x="406" y="406" width="1" height="1" fill="#cccccc"/>
<rect x="407" y="402" width="1" height="1" fill="#cccccc"/>
<rect x="407" y="403" width="1" height="1" fill="#cccccc"/>
<rect x="407" y="404" width="1" height="1" fill="#cccccc"/>
<rect x="407" y="405" width="1" height="1" fill="#cccccc"/>
<rect x="408" y="402" width="1" height="1" fill="#cccccc"/>
<rect x="408" y="403" width="1" height="1" fill="#cccccc"/>
<rect x="408" y="404" width="1" height="1" fill="#cccccc"/>
<rect x="409" y="402" width="1" height="1" fill="#cccccc"/>
<rect x="409" y="403" width="1" height="1" fill="#cccccc"/>
<rect x="410" y="402" width="1" height="1" fill="#cccccc"/>
<rect x="406" y="408" width="1" height="1" fill="#ffffff"/>
<rect x="407" y="407" width="1" height="1" fill="#ffffff"/>
<rect x="408" y="406" width="1" height="1" fill="#ffffff"/>
<rect x="409" y="405" width="1" height="1" fill="#ffffff"/>
<rect x="410" y="404" width="1" height="1" fill="#ffffff"/>
<rect x="411" y="403" width="1" height="1" fill="#ffffff"/>
<rect x="411" y="403" width="107" height="1" fill="#ffffff"/>
<rect x="406" y="408" width="1" height="12" fill="#ffffff"/>
<rect x="406" y="407" width="1" height="1" fill="#666666"/>
<rect x="407" y="406" width="1" height="1" fill="#666666"/>
<rect x="408" y="405" width="1" height="1" fill="#666666"/>
<rect x="409" y="404" width="1" height="1" fill="#666666"/>
<rect x="410" y="403" width="1" height="1" fill="#666666"/>
<rect x="411" y="402" width="1" height="1" fill="#666666"/>
<rect x="411" y="402" width="108" height="1" fill="#666666"/>
<rect x="518" y="403" width="1" height="17" fill="#666666"/>
<rect x="405" y="402" width="1" height="18" fill="#666666"/>
<rect x="296" y="420" width="111" height="1" fill="#ffffff"/>
<rect x="518" y="420" width="407" height="1" fill="#ffffff"/>
<rect x="296" y="420" width="1" height="145" fill="#ffffff"/>
<rect x="925" y="420" width="1" height="146" fill="#666666"/>
<rect x="296" y="565" width="630" height="1" fill="#666666"/>
<rect x="304" y="428" width="612" height="128" fill="#ffffff"/>
<rect x="303" y="427" width="614" height="1" fill="#666666"/>
<rect x="303" y="556" width="614" height="1" fill="#666666"/>
<rect x="303" y="427" width="1" height="130" fill="#666666"/>
<rect x="916" y="427" width="1" height="130" fill="#666666"/>
<rect x="917" y="428" width="1" height="130" fill="#ffffff"/>
<rect x="304" y="557" width="614" height="1" fill="#ffffff"/>
<rect x="916" y="429" width="1" height="1" fill="#cccccc"/>
<rect x="304" y="556" width="1" height="1" fill="#cccccc"/>
<rect x="28" y="600" width="118" height="1" fill="#ffffff"/>
<rect x="145" y="577" width="1" height="24" fill="#ffffff"/>
<rect x="28" y="577" width="117" height="1" fill="#ffffff"/>
<rect x="28" y="577" width="1" height="23" fill="#ffffff"/>
<rect x="27" y="576" width="118" height="1" fill="#666666"/>
<rect x="27" y="599" width="118" height="1" fill="#666666"/>
<rect x="27" y="576" width="1" height="24" fill="#666666"/>
<rect x="144" y="576" width="1" height="24" fill="#666666"/>
<rect x="774" y="600" width="50" height="1" fill="#ffffff"/>
<rect x="823" y="577" width="1" height="24" fill="#ffffff"/>
<rect x="774" y="577" width="49" height="1" fill="#ffffff"/>
<rect x="774" y="577" width="1" height="23" fill="#ffffff"/>
<rect x="773" y="576" width="50" height="1" fill="#666666"/>
<rect x="773" y="599" width="50" height="1" fill="#666666"/>
<rect x="773" y="576" width="1" height="24" fill="#666666"/>
<rect x="822" y="576" width="1" height="24" fill="#666666"/>
<rect x="833" y="600" width="80" height="1" fill="#ffffff"/>
<rect x="912" y="577" width="1" height="24" fill="#ffffff"/>
<rect x="833" y="577" width="79" height="1" fill="#ffffff"/>
<rect x="833" y="577" width="1" height="23" fill="#ffffff"/>
<rect x="832" y="576" width="80" height="1" fill="#666666"/>
<rect x="832" y="599" width="80" height="1" fill="#666666"/>
<rect x="832" y="576" width="1" height="24" fill="#666666"/>
<rect x="911" y="576" width="1" height="24" fill="#666666"/>
<text x="17.73" y="19" textLength="96.38" lengthAdjust="spacingAndGlyphs" font-weight="bold" font-style="normal" fill="#000">Привязка услуг</text>
<text x="135.44" y="19" textLength="92.33" lengthAdjust="spacingAndGlyphs" font-weight="bold" font-style="normal" fill="#000">Поиск адресов</text>
<text x="249.45" y="19" textLength="73.75" lengthAdjust="spacingAndGlyphs" font-weight="bold" font-style="normal" fill="#000">Начисление</text>
<text x="344.90" y="19" textLength="86.87" lengthAdjust="spacingAndGlyphs" font-weight="bold" font-style="normal" fill="#000">Типы шлюзов</text>
<text x="453.65" y="19" textLength="82.87" lengthAdjust="spacingAndGlyphs" font-weight="bold" font-style="normal" fill="#000">Типы правил</text>
<text x="558.42" y="19" textLength="143.27" lengthAdjust="spacingAndGlyphs" font-weight="bold" font-style="normal" fill="#000">Конфигурация модуля</text>
<text x="61.17" y="37" textLength="66.60" lengthAdjust="spacingAndGlyphs" font-weight="bold" font-style="normal" fill="#000">Источники</text>
<text x="273.92" y="37" textLength="141.25" lengthAdjust="spacingAndGlyphs" font-weight="bold" font-style="normal" fill="#000">Менеджер источников</text>
<text x="593.45" y="37" textLength="125.26" lengthAdjust="spacingAndGlyphs" font-weight="bold" font-style="normal" fill="#000">Интерфейсы и зоны</text>
<text x="848.74" y="37" textLength="45.42" lengthAdjust="spacingAndGlyphs" font-weight="bold" font-style="normal" fill="#000">Шлюзы</text>
<text x="136.50" y="61" textLength="58.59" lengthAdjust="spacing" font-weight="normal" font-style="normal" fill="#000" font-size="12px">Хост:порт</text>
<text x="462.80" y="61" textLength="23.49" lengthAdjust="spacing" font-weight="normal" font-style="normal" fill="#000" font-size="12px">Тип</text>
<text x="739.34" y="61" textLength="84.02" lengthAdjust="spacing" font-weight="normal" font-style="normal" fill="#000" font-size="12px">Комментарий</text>
<text x="32.81" y="78" textLength="40.57" lengthAdjust="spacingAndGlyphs" font-weight="normal" font-style="normal" fill="#000" font-size="12px">Шлюзы</text>
<text x="53.25" y="96" textLength="61.19" lengthAdjust="spacing" font-weight="normal" font-style="normal" fill="#000" font-size="12px">1.1.1.1:22</text>
<text x="53.28" y="114" textLength="33.76" lengthAdjust="spacing" font-weight="normal" font-style="normal" fill="#000" font-size="12px">10:10</text>
<text x="53.23" y="132" textLength="86.00" lengthAdjust="spacing" font-weight="normal" font-style="normal" fill="#000" font-size="12px">10.10.10.10:0</text>
<text x="53.23" y="150" textLength="78.39" lengthAdjust="spacing" font-weight="normal" font-style="normal" fill="#000" font-size="12px">10.10.20.1:0</text>
<text x="53.22" y="168" textLength="102.16" lengthAdjust="spacing" font-weight="normal" font-style="normal" fill="#000" font-size="12px">10.90.90.91:161</text>
<text x="53.24" y="186" textLength="85.49" lengthAdjust="spacing" font-weight="normal" font-style="normal" fill="#000" font-size="12px">127.0.0.1:161</text>
<text x="53.24" y="204" textLength="92.60" lengthAdjust="spacing" font-weight="normal" font-style="normal" fill="#000" font-size="12px">127.0.0.1:1855</text>
<text x="53.22" y="222" textLength="133.81" lengthAdjust="spacing" font-weight="normal" font-style="normal" fill="#000" font-size="12px">192.168.184.39:4567</text>
<text x="53.22" y="240" textLength="133.81" lengthAdjust="spacing" font-weight="normal" font-style="normal" fill="#000" font-size="12px">192.168.184.39:4567</text>
<text x="53.23" y="258" textLength="117.15" lengthAdjust="spacing" font-weight="normal" font-style="normal" fill="#000" font-size="12px">192.168.184.98:22</text>
<text x="53.70" y="276" textLength="108.79" lengthAdjust="spacing" font-weight="normal" font-style="normal" fill="#000" font-size="12px">81.30.206.217:22</text>
<text x="53.70" y="294" textLength="29.92" lengthAdjust="spacing" font-weight="normal" font-style="normal" fill="#000" font-size="12px">asd:2</text>
<text x="52.58" y="312" textLength="123.27" lengthAdjust="spacing" font-weight="normal" font-style="normal" fill="#000" font-size="12px">pool6.ufanet.ru:4567</text>
<text x="53.70" y="330" textLength="64.21" lengthAdjust="spacing" font-weight="normal" font-style="normal" fill="#000" font-size="12px">sdasdas:23</text>
<text x="321.35" y="96" textLength="38.38" lengthAdjust="spacing" font-weight="normal" font-style="normal" fill="#000" font-size="12px">Manad</text>
<text x="321.55" y="114" textLength="32.21" lengthAdjust="spacingAndGlyphs" font-weight="normal" font-style="normal" fill="#000" font-size="12px">CISCO</text>
<text x="321.50" y="132" textLength="34.89" lengthAdjust="spacingAndGlyphs" font-weight="normal" font-style="normal" fill="#000" font-size="12px">PPPoE</text>
<text x="321.50" y="150" textLength="34.89" lengthAdjust="spacingAndGlyphs" font-weight="normal" font-style="normal" fill="#000" font-size="12px">PPPoE</text>
<text x="321.27" y="168" textLength="96.91" lengthAdjust="spacing" font-weight="normal" font-style="normal" fill="#000" font-size="12px">Dlink30xx35xxU</text>
<text x="320.71" y="186" textLength="34.88" lengthAdjust="spacingAndGlyphs" font-weight="normal" font-style="normal" fill="#000" font-size="12px">Switch</text>
<text x="321.49" y="204" textLength="31.03" lengthAdjust="spacingAndGlyphs" font-weight="normal" font-style="normal" fill="#000" font-size="12px">DHCP</text>
<text x="321.35" y="222" textLength="38.38" lengthAdjust="spacing" font-weight="normal" font-style="normal" fill="#000" font-size="12px">Manad</text>
<text x="321.38" y="240" textLength="73.69" lengthAdjust="spacing" font-weight="normal" font-style="normal" fill="#000" font-size="12px">Linux_Manad</text>
<text x="321.30" y="258" textLength="45.58" lengthAdjust="spacing" font-weight="normal" font-style="normal" fill="#000" font-size="12px">Mikrotik</text>
<text x="321.55" y="276" textLength="32.21" lengthAdjust="spacingAndGlyphs" font-weight="normal" font-style="normal" fill="#000" font-size="12px">CISCO</text>
<text x="321.55" y="294" textLength="32.21" lengthAdjust="spacingAndGlyphs" font-weight="normal" font-style="normal" fill="#000" font-size="12px">CISCO</text>
<text x="321.35" y="312" textLength="38.38" lengthAdjust="spacing" font-weight="normal" font-style="normal" fill="#000" font-size="12px">Manad</text>
<text x="321.55" y="330" textLength="32.21" lengthAdjust="spacingAndGlyphs" font-weight="normal" font-style="normal" fill="#000" font-size="12px">CISCO</text>
<text x="629.48" y="204" textLength="31.28" lengthAdjust="spacingAndGlyphs" font-weight="normal" font-style="normal" fill="#000" font-size="12px">DHCP</text>
<text x="629.34" y="222" textLength="65.77" lengthAdjust="spacing" font-weight="normal" font-style="normal" fill="#000" font-size="12px">Den Manad</text>
<text x="629.34" y="240" textLength="99.73" lengthAdjust="spacing" font-weight="normal" font-style="normal" fill="#000" font-size="12px">Den Linux manad</text>
<text x="629.32" y="258" textLength="84.55" lengthAdjust="spacing" font-weight="normal" font-style="normal" fill="#000" font-size="12px">MikrotikManad</text>
<text x="24.74" y="390" textLength="57.14" lengthAdjust="spacingAndGlyphs" font-weight="bold" font-style="normal" fill="#000">Редактор</text>
<text x="30.90" y="411" textLength="117.97" lengthAdjust="spacingAndGlyphs" font-weight="bold" font-style="normal" fill="#000">Хост и порт шлюза</text>
<text x="30.75" y="467" textLength="101.44" lengthAdjust="spacingAndGlyphs" font-weight="bold" font-style="normal" fill="#000">Ключевое слово</text>
<text x="31.40" y="523" textLength="67.74" lengthAdjust="spacingAndGlyphs" font-weight="bold" font-style="normal" fill="#000">Тип шлюза</text>
<text x="31.22" y="435" textLength="98.28" lengthAdjust="spacing" font-weight="normal" font-style="normal" fill="#000" font-size="12px">192.168.184.98</text>
<text x="231.54" y="435" textLength="14.14" lengthAdjust="spacing" font-weight="normal" font-style="normal" fill="#000" font-size="12px">22</text>
<text x="33.46" y="547" textLength="51.88" lengthAdjust="spacingAndGlyphs" font-weight="bold" font-style="normal" fill="#000">Mikrotik</text>
<text x="308.42" y="416" textLength="85.61" lengthAdjust="spacingAndGlyphs" font-weight="bold" font-style="normal" fill="#000">Комментарий</text>
<text x="416.93" y="416" textLength="91.63" lengthAdjust="spacingAndGlyphs" font-weight="bold" font-style="normal" fill="#000">Конфигурация</text>
<text x="308.70" y="443" textLength="30.05" lengthAdjust="spacingAndGlyphs" font-weight="bold" font-style="italic" fill="#0000ff">login</text>
<text x="341.70" y="443" textLength="5.75" lengthAdjust="spacingAndGlyphs" font-weight="bold" font-style="normal" fill="#000">=</text>
<text x="350.60" y="443" textLength="36.99" lengthAdjust="spacingAndGlyphs" font-weight="bold" font-style="normal" fill="#ff0000">admin</text>
<text x="44.48" y="593" textLength="83.85" lengthAdjust="spacingAndGlyphs" font-weight="bold" font-style="normal" fill="#000">Восстановить</text>
<text x="791.50" y="593" textLength="16.31" lengthAdjust="spacingAndGlyphs" font-weight="bold" font-style="normal" fill="#000">Ок</text>
<text x="850.40" y="593" textLength="44.96" lengthAdjust="spacingAndGlyphs" font-weight="bold" font-style="normal" fill="#000">Отмена</text>
<text x="23.14" y="648" textLength="72.85" lengthAdjust="spacingAndGlyphs" font-weight="bold" font-style="normal" fill="#000">Модуль IPN</text>
<path d="M7 640 L13 646 M13 640 L7 646" stroke="#000" stroke-width="2.2" stroke-linecap="round"/>
<rect x="9" y="642" width="3" height="3" fill="#000"/></svg></body></html>
